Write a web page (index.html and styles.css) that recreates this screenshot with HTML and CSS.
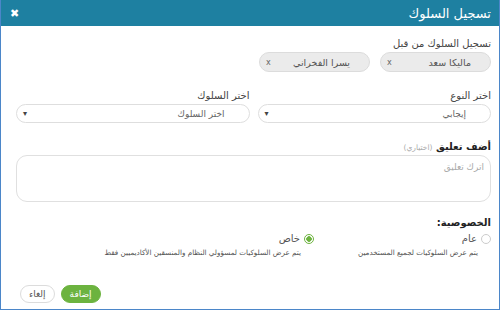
FILE: index.html
```html
<!DOCTYPE html>
<html lang="ar" dir="rtl">
<head>
    <meta charset="UTF-8">
    <title>تسجيل السلوك</title>
    <link rel="stylesheet" href="styles.css">
</head>
<body>
    <div class="modal">
        <div class="modal-header">
            <h1>تسجيل السلوك</h1>
            <span class="close">&#10006;</span>
        </div>

        <div class="modal-body">
            <div class="field">
                <label>تسجيل السلوك من قبل</label>
                <div class="chips">
                    <span class="chip">ماليكا سعد <i>x</i></span>
                    <span class="chip">يسرا الفخراني <i>x</i></span>
                </div>
            </div>

            <div class="row">
                <div class="field col">
                    <label>اختر النوع</label>
                    <div class="select"><span>إيجابي</span><b>&#9662;</b></div>
                </div>
                <div class="field col">
                    <label>اختر السلوك</label>
                    <div class="select"><span>اختر السلوك</span><b>&#9662;</b></div>
                </div>
            </div>

            <div class="field comment">
                <label class="strong">أضف تعليق <small>(اختياري)</small></label>
                <div class="textarea">اترك تعليق</div>
            </div>

            <div class="field privacy">
                <label class="strong">الخصوصية:</label>
                <div class="radios">
                    <div class="radio-opt">
                        <div class="radio-line"><span class="radio"></span>عام</div>
                        <p>يتم عرض السلوكيات لجميع المستخدمين</p>
                    </div>
                    <div class="radio-opt">
                        <div class="radio-line"><span class="radio checked"></span>خاص</div>
                        <p>يتم عرض السلوكيات لمسؤولي النظام والمنسقين الأكاديميين فقط</p>
                    </div>
                </div>
            </div>

            <div class="actions">
                <button class="btn btn-primary">إضافة</button>
                <button class="btn btn-default">إلغاء</button>
            </div>
        </div>
    </div>
</body>
</html>
```

FILE: styles.css
```css
body {
    margin: 0;
    font-family: "DejaVu Sans", "Noto Sans", sans-serif;
    background: #fff;
    color: #333;
}
.modal {
    width: 500px;
    height: 310px;
    box-sizing: border-box;
    border: 1px solid #4b86c9;
    border-top: none;
    display: flex;
    flex-direction: column;
}
.modal-header {
    background: #1e80a1;
    height: 26px;
    display: flex;
    align-items: center;
    justify-content: space-between;
    padding: 0 8px 0 9px;
    color: #fff;
}
.modal-header h1 {
    margin: 0;
    font-size: 13px;
    font-weight: normal;
}
.close {
    font-size: 11px;
    font-weight: bold;
}
.modal-body {
    padding: 12px 8px 0 15px;
    flex: 1;
    display: flex;
    flex-direction: column;
}
.field label {
    display: block;
    font-size: 10px;
    color: #444;
    margin-bottom: 3px;
}
.field label.strong {
    font-weight: bold;
    color: #222;
}
.field label small {
    font-weight: normal;
    font-size: 7.5px;
    color: #aaa;
}
.chips {
    display: flex;
    gap: 10px;
}
.chip {
    width: 111px;
    height: 20px;
    box-sizing: border-box;
    background: #ebebeb;
    border: 1px solid #dcdcdc;
    border-radius: 10px;
    padding: 0 19px 0 6px;
    display: flex;
    align-items: center;
    justify-content: space-between;
    font-size: 9.5px;
    color: #555;
}
.chip i {
    font-style: normal;
    font-size: 8px;
    color: #666;
}
.row {
    display: flex;
    gap: 8px;
    margin-top: 18px;
}
.col {
    flex: 1;
}
.select {
    height: 19px;
    box-sizing: border-box;
    border: 1px solid #dedede;
    border-radius: 10px;
    display: flex;
    align-items: center;
    justify-content: space-between;
    padding: 0 24px 0 6px;
    font-size: 9px;
    color: #666;
}
.select b {
    font-size: 8px;
    color: #444;
}
.comment {
    margin-top: 18px;
}
.textarea {
    height: 47px;
    box-sizing: border-box;
    border: 1px solid #e0e0e0;
    border-radius: 11px;
    padding: 6px 6px;
    font-size: 9px;
    color: #aaa;
}
.privacy {
    margin-top: 15px;
}
.radios {
    display: flex;
    margin-top: 5px;
}
.radio-opt {
    width: 177px;
}
.radio-line {
    display: flex;
    align-items: center;
    gap: 4px;
    font-size: 10px;
    color: #555;
}
.radio {
    width: 10px;
    height: 10px;
    border: 1px solid #ccc;
    border-radius: 50%;
    box-sizing: border-box;
}
.radio.checked {
    border-color: #6db33f;
    background: radial-gradient(circle, #6db33f 2.5px, #fff 3px);
}
.radio-opt p {
    margin: 4px 13px 0 0;
    font-size: 7.2px;
    color: #555;
    white-space: nowrap;
}
.actions {
    margin-top: auto;
    margin-bottom: 6px;
    display: flex;
    justify-content: flex-end;
    gap: 6px;
    padding-left: 4px;
}
.btn {
    font-family: inherit;
    font-size: 9px;
    height: 18px;
    border-radius: 9px;
    padding: 0 8px;
    cursor: pointer;
}
.btn-primary {
    background: #6cb33f;
    border: 1px solid #6cb33f;
    color: #fff;
}
.btn-default {
    background: #fff;
    border: 1px solid #dcdcdc;
    color: #555;
}
```
